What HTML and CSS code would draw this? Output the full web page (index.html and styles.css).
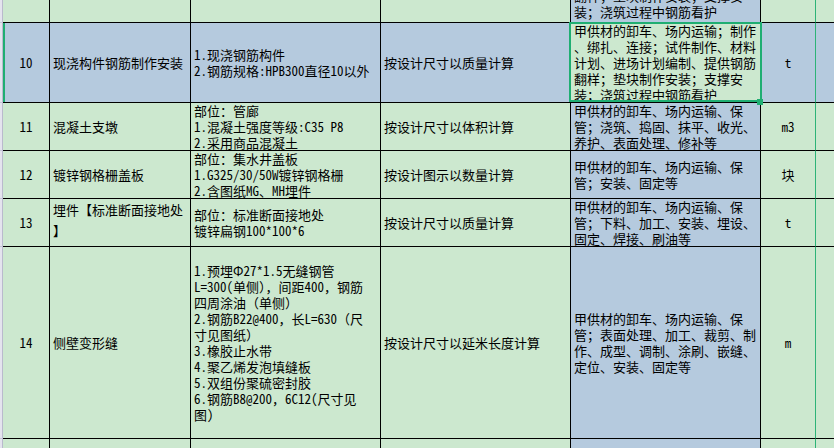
FILE: index.html
```html
<!DOCTYPE html>
<html lang="zh-CN">
<head>
<meta charset="utf-8">
<title>清单</title>
<link rel="stylesheet" href="styles.css">
</head>
<body>
<div class="sheet">
  <!-- partial top row -->
  <div class="hdr"></div>
  <div class="cell g"></div>
  <div class="cell g"></div>
  <div class="cell g"></div>
  <div class="cell g"></div>
  <div class="cell b bottom"><div>翻样；垫块制作安装；支撑安<br>装；浇筑过程中钢筋看护</div></div>
  <div class="cell g u"></div>
  <div class="cell g last"></div>

  <!-- row 10 -->
  <div class="hdr"></div>
  <div class="cell b c mark">10</div>
  <div class="cell b">现浇构件钢筋制作安装</div>
  <div class="cell b"><div>1.现浇钢筋构件<br>2.钢筋规格:HPB300直径10以外</div></div>
  <div class="cell b">按设计尺寸以质量计算</div>
  <div class="cell g sel"><div>甲供材的卸车、场内运输；制作<br>、绑扎、连接；试件制作、材料<br>计划、进场计划编制、提供钢筋<br>翻样；垫块制作安装；支撑安<br>装；浇筑过程中钢筋看护</div></div>
  <div class="cell b c u">t</div>
  <div class="cell b last"></div>

  <!-- row 11 -->
  <div class="hdr"></div>
  <div class="cell g c">11</div>
  <div class="cell g">混凝土支墩</div>
  <div class="cell g"><div>部位：管廊<br>1.混凝土强度等级:C35 P8<br>2.采用商品混凝土</div></div>
  <div class="cell g">按设计尺寸以体积计算</div>
  <div class="cell b"><div>甲供材的卸车、场内运输、保<br>管；浇筑、捣固、抹平、收光、<br>养护、表面处理、修补等</div></div>
  <div class="cell g c u">m3</div>
  <div class="cell g last"></div>

  <!-- row 12 -->
  <div class="hdr"></div>
  <div class="cell g c">12</div>
  <div class="cell g">镀锌钢格栅盖板</div>
  <div class="cell g"><div>部位：集水井盖板<br>1.G325/30/50W镀锌钢格栅<br>2.含图纸MG、MH埋件</div></div>
  <div class="cell g">按设计图示以数量计算</div>
  <div class="cell b"><div>甲供材的卸车、场内运输、保<br>管；安装、固定等</div></div>
  <div class="cell g c u">块</div>
  <div class="cell g last"></div>

  <!-- row 13 -->
  <div class="hdr"></div>
  <div class="cell g c">13</div>
  <div class="cell g spread"><div>埋件【标准断面接地处<br>】</div></div>
  <div class="cell g"><div>部位：标准断面接地处<br>镀锌扁钢100*100*6</div></div>
  <div class="cell g">按设计尺寸以质量计算</div>
  <div class="cell b"><div>甲供材的卸车、场内运输、保<br>管；下料、加工、安装、埋设、<br>固定、焊接、刷油等</div></div>
  <div class="cell g c u">t</div>
  <div class="cell g last"></div>

  <!-- row 14 -->
  <div class="hdr"></div>
  <div class="cell g c">14</div>
  <div class="cell g">侧壁变形缝</div>
  <div class="cell g"><div>1.预埋Φ27*1.5无缝钢管<br>L=300(单侧），间距400，钢筋<br>四周涂油（单侧）<br>2.钢筋B22@400，长L=630（尺<br>寸见图纸）<br>3.橡胶止水带<br>4.聚乙烯发泡填缝板<br>5.双组份聚硫密封胶<br>6.钢筋B8@200，6C12(尺寸见<br>图)</div></div>
  <div class="cell g">按设计尺寸以延米长度计算</div>
  <div class="cell b"><div>甲供材的卸车、场内运输、保<br>管；表面处理、加工、裁剪、制<br>作、成型、调制、涂刷、嵌缝、<br>定位、安装、固定等</div></div>
  <div class="cell g c u">m</div>
  <div class="cell g last"></div>

  <!-- partial bottom row -->
  <div class="hdr"></div>
  <div class="cell g"></div>
  <div class="cell g"></div>
  <div class="cell g"></div>
  <div class="cell g"></div>
  <div class="cell b"></div>
  <div class="cell g u"></div>
  <div class="cell g last"></div>
</div>
</body>
</html>
```

FILE: styles.css
```css
html, body {
  margin: 0;
  padding: 0;
}

body {
  width: 834px;
  height: 448px;
  overflow: hidden;
  background: #cce8cf;
  color: #000;
  font-family: "Noto Sans Mono CJK SC", "Noto Sans CJK SC", "DejaVu Sans", sans-serif;
  font-size: 13px;
  line-height: 16px;
}

.sheet {
  display: grid;
  grid-template-columns: 3px 47px 141px 190px 190px 190px 55px 1fr;
  grid-template-rows: 23px 80px 48px 48px 48px 192px 20px;
  width: 834px;
}

.hdr {
  background: #e4e4ee;
  border-right: 1px solid #b9bacd;
  border-bottom: 1px solid #c4c5d6;
  box-sizing: border-box;
}

.cell {
  box-sizing: border-box;
  min-width: 0;
  display: flex;
  align-items: center;
  padding: 0 3px;
  border-right: 1px solid #000;
  border-bottom: 1px solid #000;
  overflow: hidden;
  white-space: nowrap;
}

.g { background: #cce8cf; }
.b { background: #b5cade; }

.c {
  justify-content: center;
  padding: 0;
}

.u { border-right-color: #2db377; }

.last { border-right: none; }

.bottom {
  align-items: flex-end;
  padding-bottom: 2px;
}

.spread {
  align-items: flex-start;
  line-height: 21px;
}

.mark {
  box-shadow: inset 2px 0 0 #1fae72;
}

.sel {
  position: relative;
  overflow: visible;
}

.sel::after {
  content: "";
  position: absolute;
  left: -2px;
  top: -1px;
  width: 193px;
  height: 80px;
  box-sizing: border-box;
  border: 2px solid #1fae72;
  pointer-events: none;
}

.sel::before {
  content: "";
  position: absolute;
  left: 186px;
  top: 76px;
  width: 6px;
  height: 6px;
  background: #1fae72;
  z-index: 2;
}
```
